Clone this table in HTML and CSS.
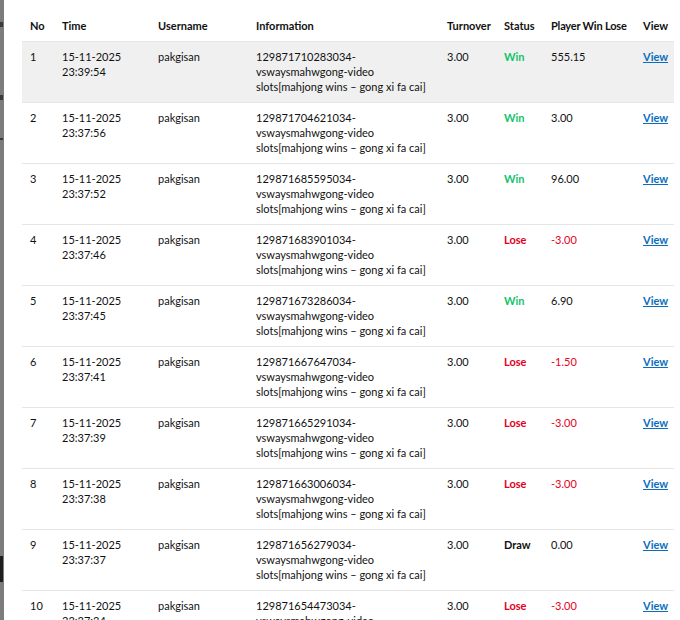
FILE: index.html
```html
<!DOCTYPE html>
<html>
<head>
<meta charset="utf-8">
<link rel="stylesheet" href="styles.css">
</head>
<body>
<div class="page">
  <div class="backdrop">
    <span class="bk b1"></span><span class="bk b2"></span><span class="bk b3"></span><span class="bk b4"></span>
  </div>
  <div class="modal">
    <table class="history">
      <colgroup>
        <col class="c-no"><col class="c-time"><col class="c-user"><col class="c-info"><col class="c-turn"><col class="c-status"><col class="c-wl"><col class="c-view">
      </colgroup>
      <thead>
        <tr><th>No</th><th>Time</th><th>Username</th><th>Information</th><th>Turnover</th><th>Status</th><th>Player Win Lose</th><th>View</th></tr>
      </thead>
      <tbody>
        <tr class="hl"><td>1</td><td>15-11-2025 23:39:54</td><td>pakgisan</td><td>129871710283034-vswaysmahwgong-video slots[mahjong wins – gong xi fa cai]</td><td>3.00</td><td class="win">Win</td><td>555.15</td><td><a href="#">View</a></td></tr>
        <tr><td>2</td><td>15-11-2025 23:37:56</td><td>pakgisan</td><td>129871704621034-vswaysmahwgong-video slots[mahjong wins – gong xi fa cai]</td><td>3.00</td><td class="win">Win</td><td>3.00</td><td><a href="#">View</a></td></tr>
        <tr><td>3</td><td>15-11-2025 23:37:52</td><td>pakgisan</td><td>129871685595034-vswaysmahwgong-video slots[mahjong wins – gong xi fa cai]</td><td>3.00</td><td class="win">Win</td><td>96.00</td><td><a href="#">View</a></td></tr>
        <tr><td>4</td><td>15-11-2025 23:37:46</td><td>pakgisan</td><td>129871683901034-vswaysmahwgong-video slots[mahjong wins – gong xi fa cai]</td><td>3.00</td><td class="lose">Lose</td><td class="neg">-3.00</td><td><a href="#">View</a></td></tr>
        <tr><td>5</td><td>15-11-2025 23:37:45</td><td>pakgisan</td><td>129871673286034-vswaysmahwgong-video slots[mahjong wins – gong xi fa cai]</td><td>3.00</td><td class="win">Win</td><td>6.90</td><td><a href="#">View</a></td></tr>
        <tr><td>6</td><td>15-11-2025 23:37:41</td><td>pakgisan</td><td>129871667647034-vswaysmahwgong-video slots[mahjong wins – gong xi fa cai]</td><td>3.00</td><td class="lose">Lose</td><td class="neg">-1.50</td><td><a href="#">View</a></td></tr>
        <tr><td>7</td><td>15-11-2025 23:37:39</td><td>pakgisan</td><td>129871665291034-vswaysmahwgong-video slots[mahjong wins – gong xi fa cai]</td><td>3.00</td><td class="lose">Lose</td><td class="neg">-3.00</td><td><a href="#">View</a></td></tr>
        <tr><td>8</td><td>15-11-2025 23:37:38</td><td>pakgisan</td><td>129871663006034-vswaysmahwgong-video slots[mahjong wins – gong xi fa cai]</td><td>3.00</td><td class="lose">Lose</td><td class="neg">-3.00</td><td><a href="#">View</a></td></tr>
        <tr><td>9</td><td>15-11-2025 23:37:37</td><td>pakgisan</td><td>129871656279034-vswaysmahwgong-video slots[mahjong wins – gong xi fa cai]</td><td>3.00</td><td class="draw">Draw</td><td>0.00</td><td><a href="#">View</a></td></tr>
        <tr><td>10</td><td>15-11-2025 23:37:34</td><td>pakgisan</td><td>129871654473034-vswaysmahwgong-video slots[mahjong wins – gong xi fa cai]</td><td>3.00</td><td class="lose">Lose</td><td class="neg">-3.00</td><td><a href="#">View</a></td></tr>
      </tbody>
    </table>
  </div>
</div>
</body>
</html>
```
FILE: styles.css
```css
html, body {
  margin: 0;
  padding: 0;
  height: 620px;
  overflow: hidden;
  background: #ffffff;
}
.page {
  display: flex;
  height: 620px;
}
.backdrop {
  width: 4px;
  flex: none;
  background: #7c7c7c;
  position: relative;
}
.bk {
  position: absolute;
  left: 0;
  width: 3px;
  background: #3a3a3a;
}
.b1 { top: 22px; height: 5px; }
.b2 { top: 95px; height: 5px; }
.b3 { top: 556px; height: 26px; background: #1e1e1e; }
.b4 { top: 138px; height: 2px; }
.modal {
  flex: 1;
  background: #fff;
  padding-left: 18px;
}
.history {
  width: 652px;
  table-layout: fixed;
  border-collapse: collapse;
  font-family: "Lato", "Noto Sans", sans-serif;
  font-size: 11px;
  line-height: 15px;
  color: #111;
}
.c-no { width: 32px; }
.c-time { width: 96px; }
.c-user { width: 98px; }
.c-info { width: 191px; }
.c-turn { width: 57px; }
.c-status { width: 47px; }
.c-wl { width: 92px; }
.c-view { width: 39px; }
th {
  text-align: left;
  font-weight: 700;
  white-space: nowrap;
  padding: 18px 8px 8px;
  height: 15px;
}
th:nth-child(7) { letter-spacing: -0.2px; }
td {
  vertical-align: top;
  padding: 7px 8px 8px;
  height: 45px;
  border-top: 1px solid #e6e6e6;
}
tr.hl td { background: #f0f0f0; }
.win { color: #12c46a; font-weight: 700; }
.lose { color: #e3001b; font-weight: 700; }
.draw { color: #111; font-weight: 700; }
.neg { color: #e8001c; }
a {
  color: #0a6ebd;
  font-weight: 700;
  text-decoration: underline;
}
```
